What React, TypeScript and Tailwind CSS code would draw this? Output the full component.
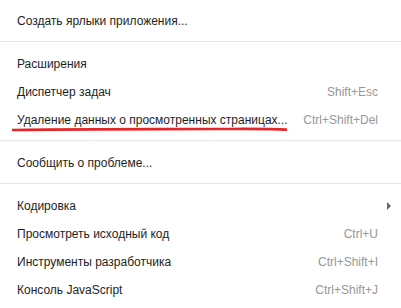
type Item = { label: string; shortcut?: string; submenu?: boolean; marked?: boolean };

const groups: Item[][] = [
  [{ label: "Создать ярлыки приложения..." }],
  [
    { label: "Расширения" },
    { label: "Диспетчер задач", shortcut: "Shift+Esc" },
    { label: "Удаление данных о просмотренных страницах...", shortcut: "Ctrl+Shift+Del", marked: true },
  ],
  [{ label: "Сообщить о проблеме..." }],
  [
    { label: "Кодировка", submenu: true },
    { label: "Просмотреть исходный код", shortcut: "Ctrl+U" },
    { label: "Инструменты разработчика", shortcut: "Ctrl+Shift+I" },
    { label: "Консоль JavaScript", shortcut: "Ctrl+Shift+J" },
  ],
];

function Row({ item }: { item: Item }) {
  return (
    <div className="relative flex h-[28px] items-center justify-between whitespace-nowrap pl-[17px] pr-[23px]">
      <span className="text-[#1e1e1e]">{item.label}</span>
      {item.shortcut && <span className="text-[#979797]">{item.shortcut}</span>}
      {item.submenu && (
        <span className="absolute right-[10px] top-[10px] h-0 w-0 border-y-[4px] border-l-[4px] border-y-transparent border-l-[#666]" />
      )}
      {item.marked && (
        <svg className="absolute left-[12px] top-[20px]" width="276" height="6" viewBox="0 0 276 6">
          <path d="M1 4 C 40 3, 150 3.2, 200 3 S 260 2.6, 274 3.6" stroke="#e3262a" strokeWidth="2.6" fill="none" strokeLinecap="round" />
        </svg>
      )}
    </div>
  );
}

export default function App() {
  return (
    <div className="h-[308px] w-[401px] overflow-hidden bg-white pt-[7px] text-[12px] font-['Liberation_Sans',sans-serif]">
      {groups.map((g, i) => (
        <div key={i}>
          {i > 0 && <div className="mb-[8px] mt-[6px] h-px bg-[#e6e6e6]" />}
          {g.map((item) => (
            <Row key={item.label} item={item} />
          ))}
        </div>
      ))}
    </div>
  );
}
